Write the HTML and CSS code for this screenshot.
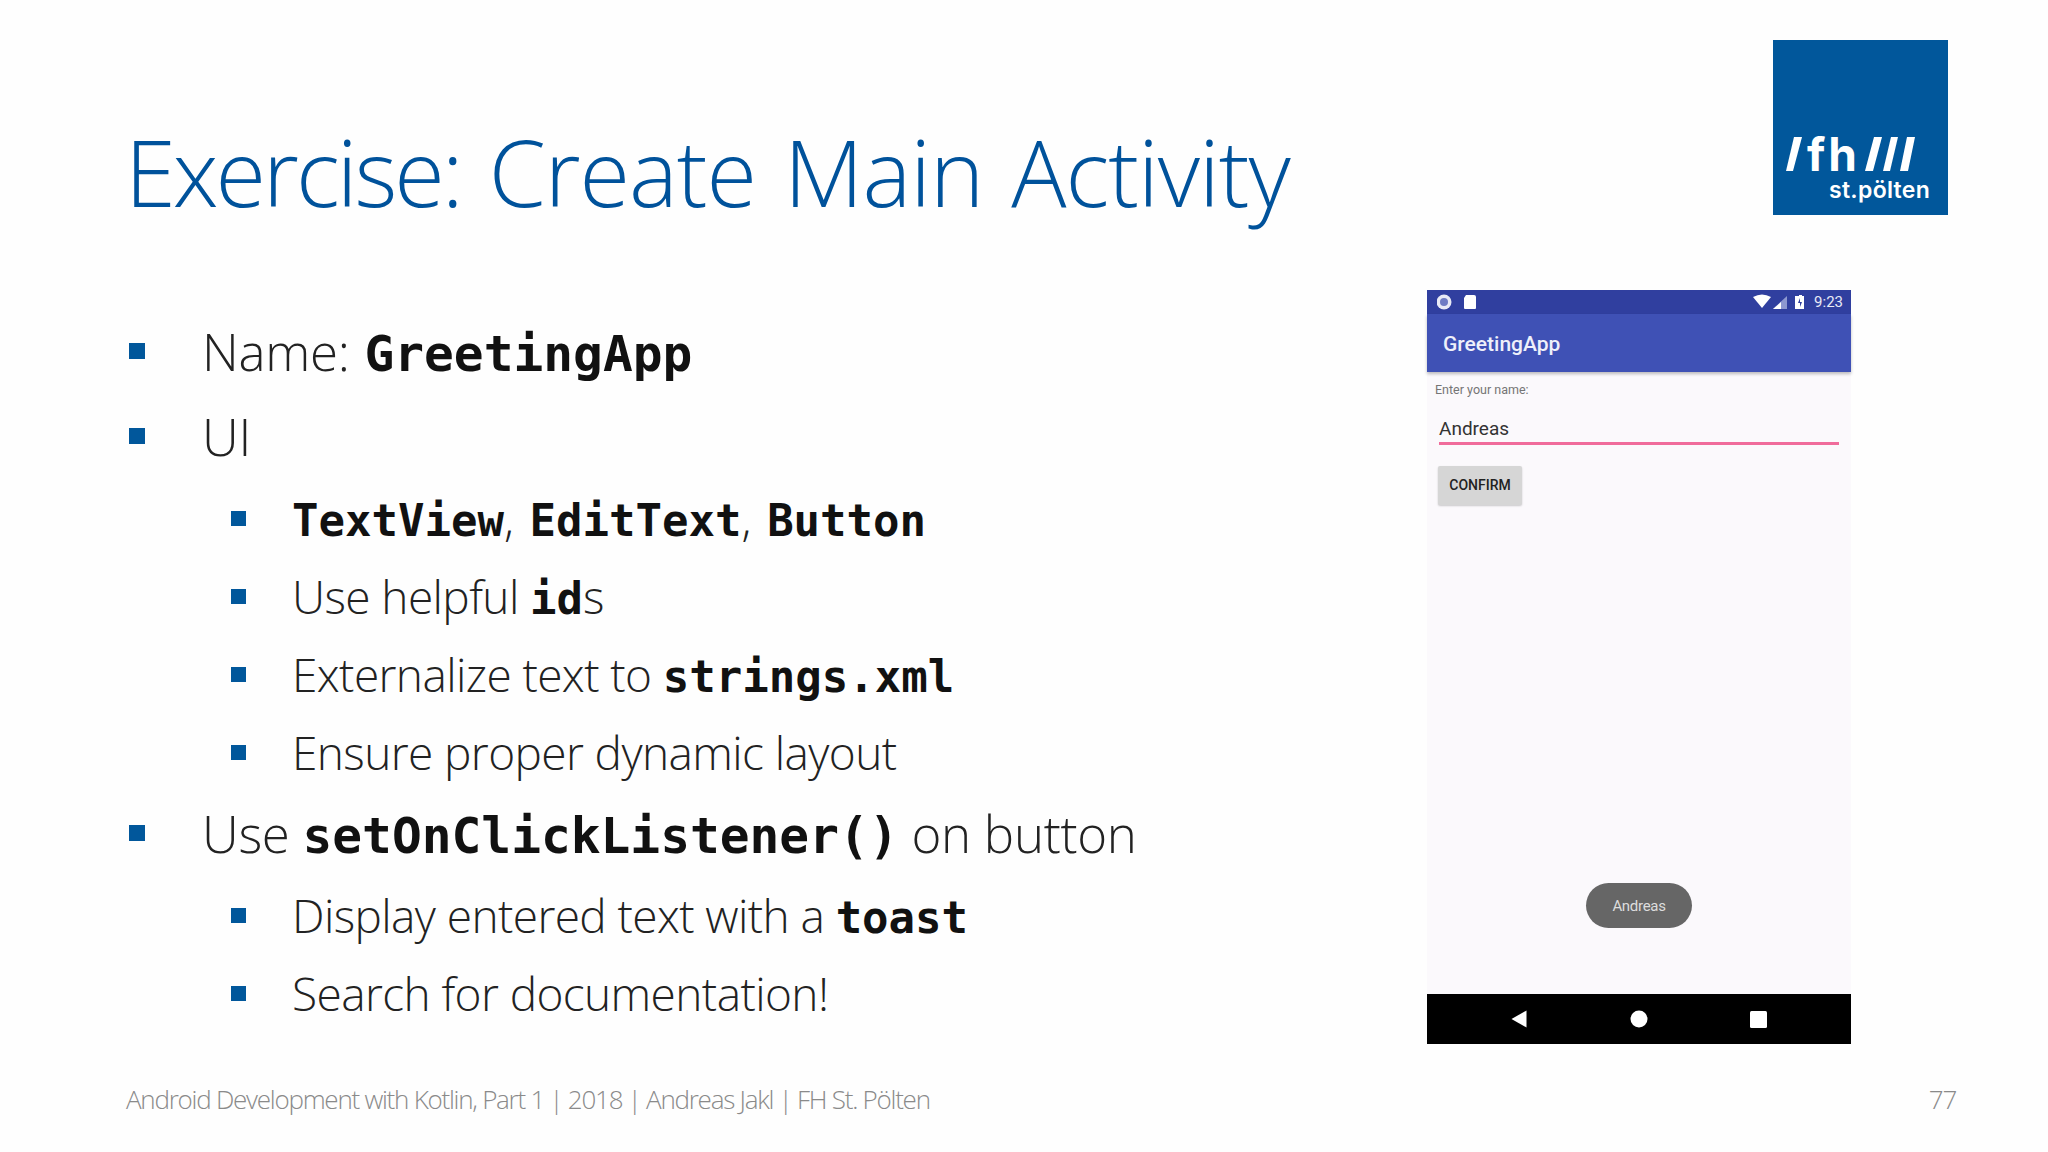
FILE: index.html
```html
<!DOCTYPE html>
<html lang="en">
<head>
<meta charset="utf-8">
<title>Exercise: Create Main Activity</title>
<link rel="stylesheet" href="styles.css">
</head>
<body>
<div class="slide">
  <header class="head">
    <h1 class="title"><span class="title-lead">Exercise:</span> Create Main Activity</h1>
    <div class="logo">
      <svg class="logo-art" viewBox="0 0 175 175" width="175" height="175" aria-hidden="true">
        <polygon points="13,131 20,131 29,97 21,97" fill="#fff"/>
        <polygon points="92,131 100,131 109,97 101,97" fill="#fff"/>
        <polygon points="110,131 117,131 125,97 118,97" fill="#fff"/>
        <polygon points="127,131 135,131 142,97 134,97" fill="#fff"/>
      </svg>
      <span class="logo-fh">fh</span>
      <span class="logo-st">st.pölten</span>
    </div>
  </header>
  <main class="content">
    <ul class="list">
      <li class="l1 first">Name: <code>GreetingApp</code></li>
      <li class="l1 second">UI</li>
      <li class="l2 comma-list"><code>TextView</code>, <code>EditText</code>, <code>Button</code></li>
      <li class="l2 sib">Use helpful <code>id</code>s</li>
      <li class="l2 sib">Externalize text to <code>strings.xml</code></li>
      <li class="l2 sib">Ensure proper dynamic layout</li>
      <li class="l1">Use <code>setOnClickListener()</code> on button</li>
      <li class="l2">Display entered text with a <code>toast</code></li>
      <li class="l2 sib">Search for documentation!</li>
    </ul>
    <div class="phone">
      <div class="status">
        <svg class="st-left" width="40" height="16" viewBox="0 0 40 16" aria-hidden="true">
          <circle cx="7" cy="8" r="7.5" fill="#e8eaf6"/>
          <circle cx="7" cy="8" r="4" fill="#6f7cc4"/>
          <path d="M29 1h8a2 2 0 0 1 2 2v11a1 1 0 0 1-1 1H28a1 1 0 0 1-1-1V4z" fill="#fff"/>
        </svg>
        <svg class="st-right" width="58" height="16" viewBox="0 0 58 16" aria-hidden="true">
          <path d="M0 3Q9-2 18 3L9 14z" fill="#fff"/>
          <path d="M20 15L34 2v13z" fill="#8d98d0"/>
          <path d="M20 15L28 8v7z" fill="#fff"/>
          <path d="M46 1h3v1h2v13h-9V2h4z" fill="#fff"/>
          <path d="M47 4l-2 5h2v4l2-5h-2z" fill="#303f9f"/>
        </svg>
        <span class="clock">9:23</span>
      </div>
      <div class="appbar">GreetingApp</div>
      <div class="screen">
        <div class="prompt">Enter your name:</div>
        <div class="field">Andreas</div>
        <div class="button">CONFIRM</div>
      </div>
      <div class="toast">Andreas</div>
      <div class="nav">
        <svg width="16" height="18" viewBox="0 0 16 18" aria-hidden="true"><path d="M15.500 .5v17L.5 9z" fill="#fff"/></svg>
        <svg width="18" height="18" viewBox="0 0 18 18" aria-hidden="true"><circle cx="9" cy="9" r="8.500" fill="#fff"/></svg>
        <svg width="17" height="17" viewBox="0 0 17 17" aria-hidden="true"><rect width="17" height="17" rx="1.500" fill="#fff"/></svg>
      </div>
    </div>
  </main>
  <footer class="foot">
    <span>Android Development with Kotlin, Part 1 | 2018 | Andreas Jakl | FH St. Pölten</span>
    <span>77</span>
  </footer>
</div>
</body>
</html>
```
FILE: styles.css
```css
html, body { margin: 0; padding: 0; }
body { background: #fefefe; }
.slide {
  width: 2048px;
  height: 1152px;
  display: flex;
  flex-direction: column;
  overflow: hidden;
  font-family: "Open Sans", "Liberation Sans", sans-serif;
  font-weight: 300;
  color: #222;
}
.head {
  height: 290px;
  padding: 40px 100px 0 125px;
  box-sizing: border-box;
  display: flex;
  justify-content: space-between;
  align-items: flex-start;
}
.title {
  margin: 82px 0 0;
  font-size: 92px;
  line-height: 100px;
  font-weight: 300;
  letter-spacing: -1px;
  word-spacing: 5px;
  color: #00529b;
}
.title-lead { letter-spacing: -3px; }
.logo {
  position: relative;
  width: 175px;
  height: 175px;
  background: #01579b;
  color: #fff;
  font-family: Inter, "Liberation Sans", sans-serif;
}
.logo-art { display: block; }
.logo-fh {
  position: absolute;
  left: 34px;
  top: 86px;
  font-size: 46px;
  line-height: 56px;
  font-weight: 700;
  letter-spacing: 3px;
}
.logo-st {
  position: absolute;
  left: 56px;
  top: 136px;
  font-size: 23px;
  line-height: 28px;
  font-weight: 600;
  letter-spacing: .3px;
}
.content {
  height: 754px;
  padding-right: 197px;
  display: flex;
  justify-content: space-between;
}
.list { margin: 0; padding: 0; list-style: none; }
.list li { position: relative; white-space: nowrap; }
.list li::before {
  content: "";
  position: absolute;
  background: #01579b;
}
.l1 {
  margin-top: 19px;
  padding-left: 202px;
  font-size: 51px;
  line-height: 64px;
  letter-spacing: -.3px;
}
.l1.first { margin-top: 29px; word-spacing: 2px; }
.l1.second { margin-top: 21px; }
.l1::before { left: 129px; top: 24px; width: 16px; height: 16px; }
.l2 {
  margin-top: 20px;
  padding-left: 292px;
  font-size: 46px;
  line-height: 60px;
  letter-spacing: -.6px;
}
.l2.sib { margin-top: 18px; }
.l2.comma-list { word-spacing: 5px; }
.l2::before { left: 231px; top: 23px; width: 15px; height: 15px; }
code {
  font-family: "DejaVu Sans Mono", "Liberation Mono", monospace;
  font-weight: 700;
  color: #111;
  line-height: 0;
  letter-spacing: 0;
}
.l1 code { font-size: 49.500px; }
.l2 code { font-size: 44px; }
.phone {
  position: relative;
  width: 424px;
  height: 754px;
  display: flex;
  flex-direction: column;
  background: #fbf9fc;
  font-family: Roboto, "Liberation Sans", sans-serif;
  font-weight: 400;
}
.status {
  height: 24px;
  flex: none;
  background: #303f9f;
  display: flex;
  align-items: center;
  padding: 0 8px 0 10px;
  color: #e8eaf6;
  font-size: 15px;
}
.st-right { margin-left: auto; margin-right: 3px; }
.appbar {
  height: 58px;
  flex: none;
  background: #3f51b5;
  box-shadow: 0 2px 3px rgba(0, 0, 0, .25);
  color: #eef0fa;
  font-size: 21px;
  font-weight: 500;
  line-height: 60px;
  padding-left: 16px;
}
.screen { flex: 1; padding: 10px 12px 0 8px; }
.prompt { font-size: 12.500px; line-height: 16px; color: #757575; }
.field {
  margin: 19px 0 0 4px;
  padding-bottom: 2px;
  font-size: 19px;
  line-height: 23px;
  color: #333;
  border-bottom: 3px solid #f06c9b;
}
.button {
  margin: 21px 0 0 3px;
  width: 84px;
  height: 39px;
  background: #d6d6d6;
  border-radius: 2px;
  box-shadow: 0 1px 2px rgba(0, 0, 0, .2);
  text-align: center;
  font-size: 14px;
  line-height: 39px;
  font-weight: 500;
  color: #222;
}
.toast {
  position: absolute;
  left: 159px;
  top: 593px;
  width: 106px;
  height: 45px;
  border-radius: 23px;
  background: #666;
  color: #ddd;
  font-size: 15px;
  line-height: 46px;
  text-align: center;
  letter-spacing: -.3px;
}
.nav {
  height: 50px;
  flex: none;
  background: #000;
  display: flex;
  align-items: center;
  justify-content: space-between;
  padding: 0 84px 0 84px;
}
.foot {
  flex: 1;
  display: flex;
  justify-content: space-between;
  align-items: flex-start;
  padding: 40px 92px 0 126px;
  font-size: 26px;
  line-height: 30px;
  letter-spacing: -1.250px;
  color: #8a8a8a;
}
```
